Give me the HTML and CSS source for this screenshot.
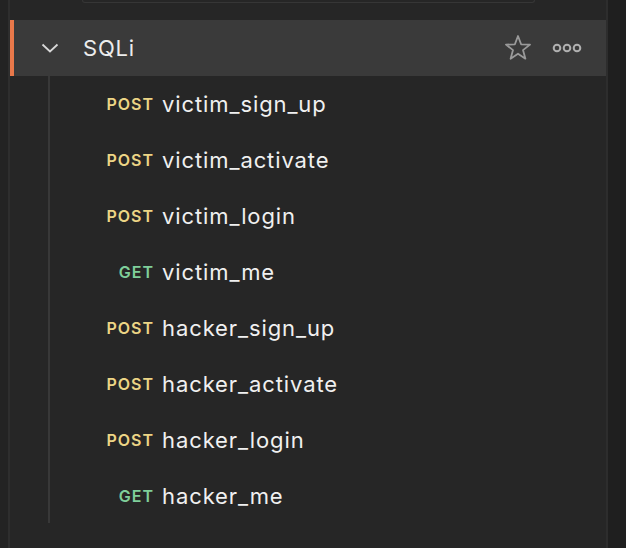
FILE: index.html
```html
<!DOCTYPE html>
<html>
<head>
<meta charset="utf-8">
<link rel="stylesheet" href="styles.css">
</head>
<body>
<div class="app">
  <div class="gutter"></div>
  <div class="main">
    <div class="top"><div class="prev-box"></div></div>
    <div class="folder">
      <svg class="chev" width="18" height="10" viewBox="0 0 18 10"><path d="M1.5 1.5 L9 8.5 L16.5 1.5" fill="none" stroke="#d8d8d8" stroke-width="1.8"/></svg>
      <span class="folder-name">SQLi</span>
      <span class="spacer"></span>
      <svg class="star" width="28" height="27" viewBox="0 0 28 27"><path d="M14 2 L17.1 10.3 L26 10.6 L19 16.1 L21.4 24.7 L14 19.7 L6.6 24.7 L9 16.1 L2 10.6 L10.9 10.3 Z" fill="none" stroke="#9a9a9a" stroke-width="1.8" stroke-linejoin="round"/></svg>
      <svg class="dots" width="30" height="10" viewBox="0 0 30 10"><circle cx="5" cy="5" r="3.3" fill="none" stroke="#b0b0b0" stroke-width="2"/><circle cx="15" cy="5" r="3.3" fill="none" stroke="#b0b0b0" stroke-width="2"/><circle cx="25" cy="5" r="3.3" fill="none" stroke="#b0b0b0" stroke-width="2"/></svg>
    </div>
    <div class="tree">
      <div class="row"><span class="method post">POST</span><span class="name">victim_sign_up</span></div>
      <div class="row"><span class="method post">POST</span><span class="name">victim_activate</span></div>
      <div class="row"><span class="method post">POST</span><span class="name">victim_login</span></div>
      <div class="row"><span class="method get">GET</span><span class="name">victim_me</span></div>
      <div class="row"><span class="method post">POST</span><span class="name">hacker_sign_up</span></div>
      <div class="row"><span class="method post">POST</span><span class="name">hacker_activate</span></div>
      <div class="row"><span class="method post">POST</span><span class="name">hacker_login</span></div>
      <div class="row"><span class="method get">GET</span><span class="name">hacker_me</span></div>
    </div>
  </div>
  <div class="side"></div>
</div>
</body>
</html>
```
FILE: styles.css
```css
html, body {
  margin: 0;
  padding: 0;
  background: #252525;
  font-family: Inter, "Noto Sans", sans-serif;
}
.app {
  display: flex;
  width: 626px;
  height: 548px;
  overflow: hidden;
}
.gutter {
  width: 8px;
  background: #232323;
  border-right: 2px solid #2e2e2e;
  flex: none;
}
.main {
  width: 596px;
  flex: none;
  background: #262626;
  border-right: 2px solid #2d2d2d;
}
.side {
  flex: 1;
  background: #1f1f1f;
}
.top {
  height: 20px;
}
.prev-box {
  margin-left: 72px;
  width: 451px;
  height: 2px;
  border: 1px solid #363636;
  border-top: none;
  border-radius: 0 0 4px 4px;
}
.folder {
  height: 56px;
  background: #3a3a3a;
  border-left: 4px solid #e8784a;
  display: flex;
  align-items: center;
}
.chev {
  margin-left: 27px;
  flex: none;
}
.folder-name {
  margin-left: 24px;
  color: #ececec;
  font-size: 22px;
  letter-spacing: 0.8px;
}
.spacer { flex: 1; }
.star {
  flex: none;
  margin-top: -2px;
}
.dots {
  flex: none;
  margin-left: 20px;
  margin-right: 24px;
}
.tree {
  margin-left: 38px;
  border-left: 2px solid #383838;
  height: 447px;
}
.row {
  height: 56px;
  display: flex;
  align-items: center;
}
.method {
  width: 104px;
  text-align: right;
  font-size: 16px;
  font-weight: 600;
  letter-spacing: 1px;
  margin-right: 8px;
  flex: none;
}
.post { color: #ecd585; }
.get { color: #7fcf9a; }
.name {
  color: #f0f0f0;
  font-size: 22px;
  letter-spacing: 0.9px;
}
```
